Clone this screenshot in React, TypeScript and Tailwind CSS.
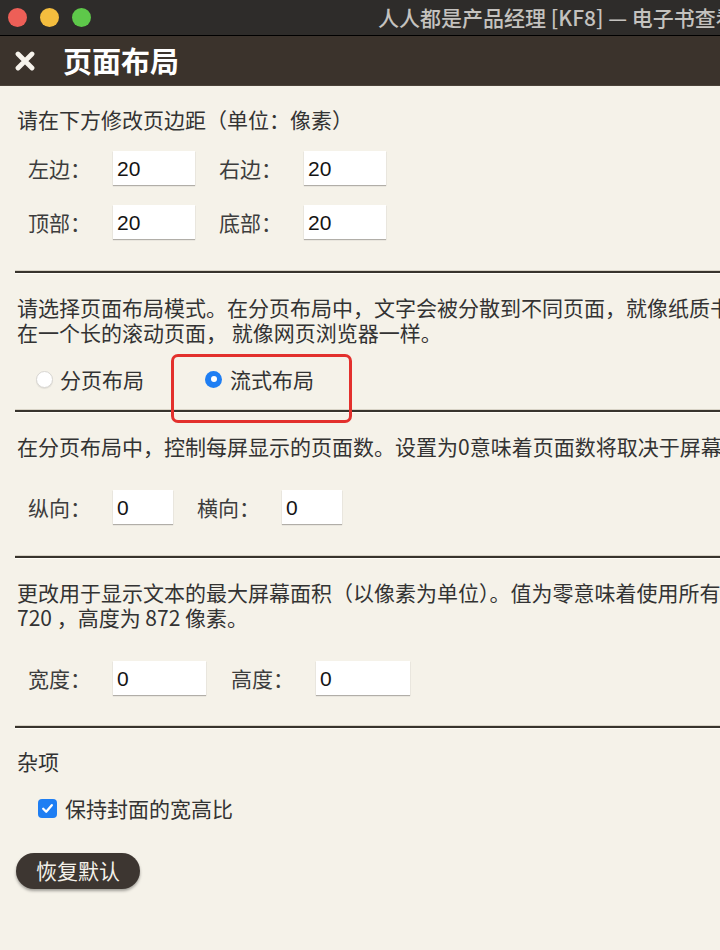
import React from "react";

const cjk = "font-['Noto_Sans_CJK_SC','Noto_Sans',sans-serif]";

function Field({ value, className }: { value: string; className: string }) {
  return (
    <input
      readOnly
      value={value}
      className={`${className} h-[34px] bg-white pl-[4px] pt-[2px] text-[21px] text-[#141414] font-['Liberation_Sans',sans-serif] outline-none shadow-[0_1px_1px_rgba(0,0,0,0.28)]`}
    />
  );
}

function Label({ children }: { children: React.ReactNode }) {
  return <span className="w-[85px] shrink-0 text-[21px] leading-[25px] text-[#3d3d3d]">{children}</span>;
}

function Rule() {
  return <div className="-ml-[2px] mr-[-40px] h-[2px] bg-[#38342d] shadow-[0_1px_0_#fffdf7,0_-1px_0_#d8d3c6]" />;
}

export default function App() {
  return (
    <div className={`relative h-[950px] w-[720px] overflow-hidden bg-[#f5f2e9] ${cjk}`}>
      {/* window title bar */}
      <div className="flex h-[36px] items-center border-b border-black bg-[#2e2c2a]">
        <div className="ml-[8px] flex gap-[13px]">
          <span className="h-[19px] w-[19px] rounded-full bg-[#ed5f57]" />
          <span className="h-[19px] w-[19px] rounded-full bg-[#f4bd3e]" />
          <span className="h-[19px] w-[19px] rounded-full bg-[#5ec84a]" />
        </div>
        <span className="ml-[287px] whitespace-nowrap text-[21px] font-medium leading-none text-[#c4c2bf]">
          人人都是产品经理 [KF8] — 电子书查看器
        </span>
      </div>

      {/* dialog header */}
      <div className="flex h-[50px] items-center border-b border-[#4a4239] bg-[#3b332c]">
        <svg className="ml-[15px]" width="20" height="20" viewBox="0 0 20 20">
          <path d="M3 3L17 17M17 3L3 17" stroke="#f6f3ec" strokeWidth="4.8" strokeLinecap="round" />
        </svg>
        <span className="ml-[28px] text-[29px] font-bold leading-none text-white">页面布局</span>
      </div>

      <div className="pl-[17px] text-[#333]">
        <p className="mt-[21px] whitespace-nowrap text-[21px] leading-[25px]">请在下方修改页边距（单位：像素）</p>

        <div className="mt-[19px] flex items-center pl-[11px]">
          <Label>左边：</Label>
          <Field value="20" className="w-[82px]" />
          <span className="ml-[24px]" />
          <Label>右边：</Label>
          <Field value="20" className="w-[82px]" />
        </div>
        <div className="mt-[20px] flex items-center pl-[11px]">
          <Label>顶部：</Label>
          <Field value="20" className="w-[82px]" />
          <span className="ml-[24px]" />
          <Label>底部：</Label>
          <Field value="20" className="w-[82px]" />
        </div>

        <div className="mt-[32px]">
          <Rule />
        </div>

        <p className="mt-[22px] whitespace-nowrap text-[21px] leading-[25px]">
          请选择页面布局模式。在分页布局中，文字会被分散到不同页面，就像纸质书籍一样。在流式布局中，文字会显示
          <br />
          在一个长的滚动页面， 就像网页浏览器一样。
        </p>

        <div className="relative mt-[22px] flex h-[24px] items-center">
          <div className="ml-[19px] flex w-[169px] items-center">
            <span className="h-[17px] w-[17px] rounded-full border border-[#d8d6d2] bg-white shadow-[0_1px_1px_rgba(0,0,0,0.08)]" />
            <span className="ml-[7px] text-[21px] leading-[25px] text-[#333]">分页布局</span>
          </div>
          <div className="flex items-center">
            <span className="flex h-[17px] w-[17px] items-center justify-center rounded-full bg-[#1e7ef3]">
              <span className="h-[6px] w-[6px] rounded-full bg-white" />
            </span>
            <span className="ml-[8px] text-[21px] leading-[25px] text-[#333]">流式布局</span>
          </div>
          <div className="absolute left-[154px] top-[-13px] h-[69px] w-[181px] rounded-[7px] border-[3px] border-[#e3302d]" />
        </div>

        <div className="mt-[19px]">
          <Rule />
        </div>

        <p className="mt-[22px] whitespace-nowrap text-[21px] leading-[25px]">
          在分页布局中，控制每屏显示的页面数。设置为0意味着页面数将取决于屏幕大小。
        </p>

        <div className="mt-[31px] flex items-center pl-[11px]">
          <Label>纵向：</Label>
          <Field value="0" className="w-[60px]" />
          <span className="ml-[24px]" />
          <Label>横向：</Label>
          <Field value="0" className="w-[60px]" />
        </div>

        <div className="mt-[32px]">
          <Rule />
        </div>

        <p className="mt-[22px] whitespace-nowrap text-[21px] leading-[25px]">
          更改用于显示文本的最大屏幕面积（以像素为单位）。值为零意味着使用所有可用的屏幕区域。当前屏幕宽度为
          <br />
          720 ，高度为 872 像素。
        </p>

        <div className="mt-[31px] flex items-center pl-[11px]">
          <Label>宽度：</Label>
          <Field value="0" className="w-[93px]" />
          <span className="ml-[25px]" />
          <Label>高度：</Label>
          <Field value="0" className="w-[94px]" />
        </div>

        <div className="mt-[31px]">
          <Rule />
        </div>

        <p className="mt-[21px] text-[21px] leading-[25px]">杂项</p>

        <div className="mt-[22px] flex h-[25px] items-center">
          <span className="ml-[21px] flex h-[19px] w-[19px] items-center justify-center rounded-[4px] bg-[#1e7ef3]">
            <svg width="13" height="13" viewBox="0 0 13 13">
              <path d="M2.2 6.8L5.2 9.8L10.8 3.2" fill="none" stroke="white" strokeWidth="2.3" strokeLinecap="round" strokeLinejoin="round" />
            </svg>
          </span>
          <span className="ml-[8px] text-[21px] leading-[25px] text-[#333]">保持封面的宽高比</span>
        </div>

        <button className="-ml-[1px] mt-[32px] flex h-[36px] w-[124px] items-center justify-center rounded-full bg-[#3d3631] text-[21px] text-[#f4f1ea] shadow-[0_2px_3px_rgba(0,0,0,0.35)]">
          恢复默认
        </button>
      </div>
    </div>
  );
}
